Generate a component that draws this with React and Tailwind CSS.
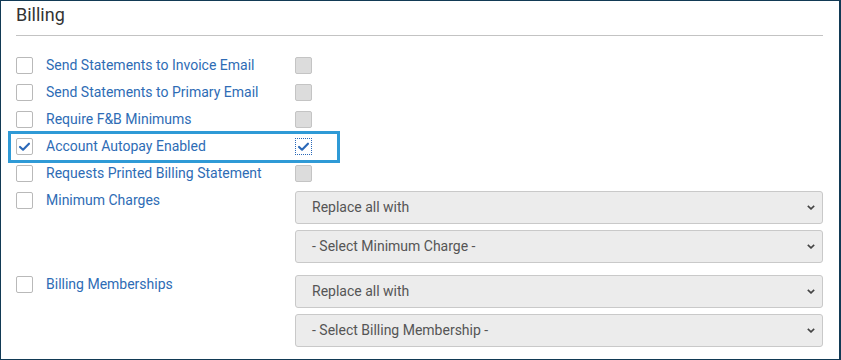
import { useState } from 'react'

const rows = [
  { label: 'Send Statements to Invoice Email', checked: false },
  { label: 'Send Statements to Primary Email', checked: false },
  { label: 'Require F&B Minimums', checked: false },
  { label: 'Account Autopay Enabled', checked: true, focused: true },
  { label: 'Requests Printed Billing Statement', checked: false },
]

// Marca de verificación azul
const Check = () => (
  <svg viewBox="0 0 16 16" className="w-[13px] h-[13px]">
    <path d="M2.5 8.5 L6.2 12 L13.5 4.5" fill="none" stroke="#2a68b8" strokeWidth="2.6" strokeLinecap="round" strokeLinejoin="round" />
  </svg>
)

const Box = ({ checked }) => (
  <span className="w-[17px] h-[17px] shrink-0 rounded-[2px] border border-[#b9b9b9] bg-white flex items-center justify-center">
    {checked && <Check />}
  </span>
)

const GrayBox = ({ checked, focused }) => (
  focused ? (
    <span className="w-[17px] h-[17px] shrink-0 border border-dotted border-[#2a68b8] bg-white flex items-center justify-center">
      {checked && <Check />}
    </span>
  ) : (
    <span className="w-[17px] h-[17px] shrink-0 rounded-[2px] border border-[#c4c4c4] bg-[#dcdcdc]" />
  )
)

const Select = ({ value }) => (
  <div className="h-[33px] w-full rounded-[3px] border border-[#c9c9c9] bg-[#ececec] flex items-center justify-between pl-[16px] pr-[7px] text-[14px] text-[#555]">
    <span>{value}</span>
    <svg viewBox="0 0 10 6" className="w-[8px] h-[5px]">
      <path d="M1 1 L5 4.8 L9 1" fill="none" stroke="#444" strokeWidth="2" />
    </svg>
  </div>
)

const App = () => {
  const [items] = useState(rows)

  return (
    <div className="w-[841px] h-[360px] bg-white border border-r-2 border-[#123a55] overflow-hidden" style={{ fontFamily: 'Roboto, "Liberation Sans", sans-serif' }}>
      <div className="pl-[15px] pr-[16px]">

        {/* Título */}
        <div className="pt-[1px] h-[35px] border-b border-[#c3c3c3]">
          <h2 className="text-[18px] leading-[26px] text-[#333]">Billing</h2>
        </div>

        {/* Casillas */}
        <div className="mt-[16px]">
          {items.map((r) => (
            <div key={r.label} className="relative flex items-center h-[27px]">
              {r.focused && (
                <span className="absolute -left-[8px] top-[-2px] w-[332px] h-[32px] border-[3px] border-[#2f9ad6]" />
              )}
              <div className="w-[279px] flex items-center gap-[13px]">
                <Box checked={r.checked} />
                <span className="text-[14px] text-[#2e6cb5]">{r.label}</span>
              </div>
              <GrayBox checked={r.checked} focused={r.focused} />
            </div>
          ))}
        </div>

        {/* Minimum Charges */}
        <div className="flex mt-[4px]">
          <div className="w-[279px] flex items-start gap-[13px] pt-[1px]">
            <Box />
            <span className="text-[14px] leading-[17px] text-[#2e6cb5]">Minimum Charges</span>
          </div>
          <div className="w-[528px] flex flex-col gap-[6px]">
            <Select value="Replace all with" />
            <Select value="- Select Minimum Charge -" />
          </div>
        </div>

        {/* Billing Memberships */}
        <div className="flex mt-[12px]">
          <div className="w-[279px] flex items-start gap-[13px] pt-[1px]">
            <Box />
            <span className="text-[14px] leading-[17px] text-[#2e6cb5]">Billing Memberships</span>
          </div>
          <div className="w-[528px] flex flex-col gap-[6px]">
            <Select value="Replace all with" />
            <Select value="- Select Billing Membership -" />
          </div>
        </div>

      </div>
    </div>
  )
}

export default App
